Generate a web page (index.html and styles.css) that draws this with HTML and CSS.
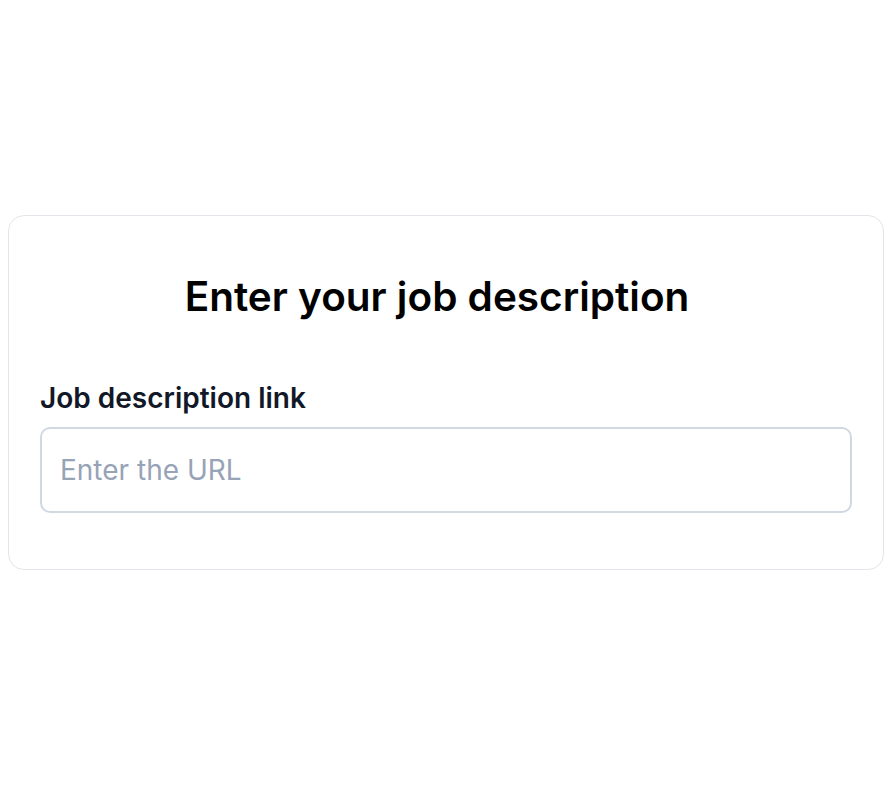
FILE: index.html
```html
<!doctype html>
<html>
<head>
	<meta charset="UTF-8" />
	<title>Job description</title>
	<link rel="stylesheet" href="styles.css">
</head>
<body>
	<div class="page">
		<div class="card">
			<h1 class="cardTitle">Enter your job description</h1>
			<label class="fieldLabel" for="jobUrl">Job description link</label>
			<input class="fieldInput" id="jobUrl" type="text" placeholder="Enter the URL">
		</div>
	</div>
</body>
</html>
```

FILE: styles.css
```css
body {
	margin: 0;
	font-family: Inter, "Noto Sans", sans-serif;
	background: #fff;
}
.page {
	padding: 215px 8px 0px 8px;
}
.card {
	border: 1.5px solid #e2e5ea;
	border-radius: 16px;
	padding: 56px 31px 56px 31px;
	display: flex;
	flex-direction: column;
}
.cardTitle {
	margin: 0px 18px 59px 0px;
	font-size: 40.5px;
	font-weight: 600;
	line-height: 50px;
	text-align: center;
	color: #000;
}
.fieldLabel {
	font-size: 28px;
	font-weight: 600;
	line-height: 34px;
	color: #111827;
	margin-bottom: 12px;
}
.fieldInput {
	height: 86px;
	box-sizing: border-box;
	border: 2px solid #cfd8e3;
	border-radius: 10px;
	padding: 0px 18px;
	font-family: Inter, "Noto Sans", sans-serif;
	font-size: 28px;
	color: #111827;
	outline: none;
}
.fieldInput::placeholder {
	color: #97a3b6;
}
```
